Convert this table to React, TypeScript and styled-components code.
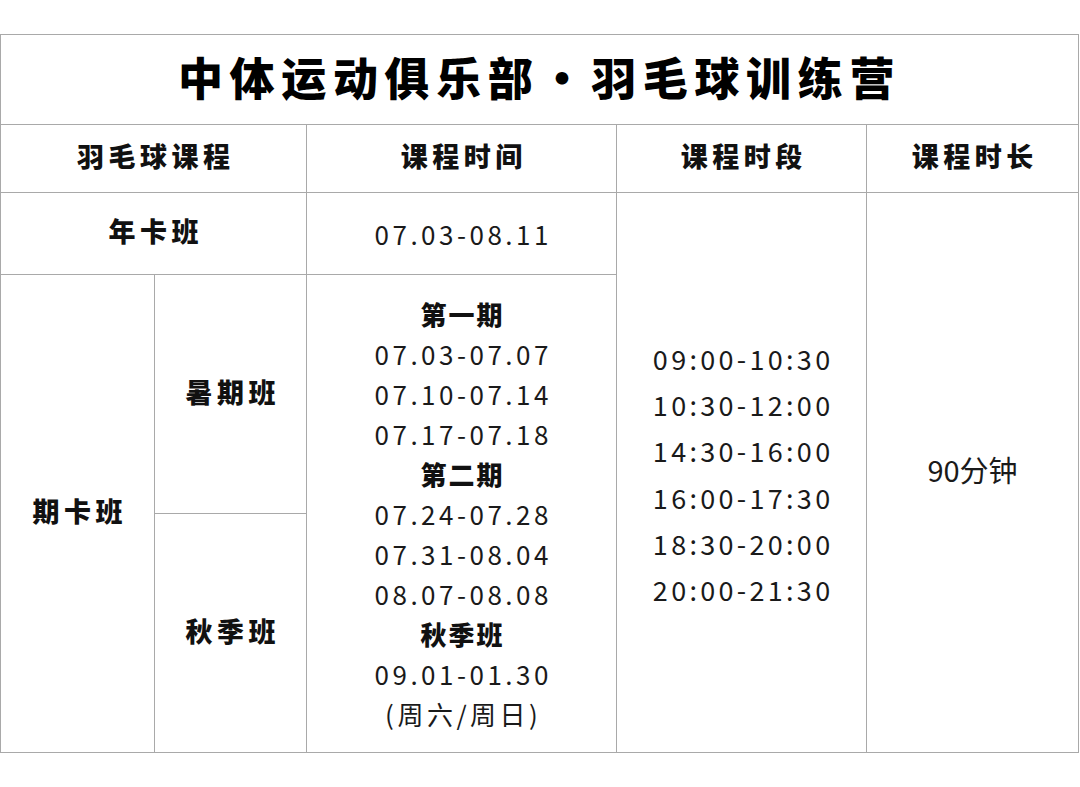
import styled, { createGlobalStyle } from 'styled-components'

const GlobalStyle = createGlobalStyle`
  html, body {
    margin: 0;
    padding: 0;
    background: #ffffff;
  }
  body {
    font-family: "Noto Sans CJK SC", "Noto Sans", sans-serif;
    color: #111111;
  }
`

const LINE = '#a9a9a9'

const summerDates = [
  { text: '第一期', bold: true },
  { text: '07.03-07.07' },
  { text: '07.10-07.14' },
  { text: '07.17-07.18' },
  { text: '第二期', bold: true },
  { text: '07.24-07.28' },
  { text: '07.31-08.04' },
  { text: '08.07-08.08' },
  { text: '秋季班', bold: true },
  { text: '09.01-01.30' },
  { text: '(周六/周日)' },
]

const timeSlots = [
  '09:00-10:30',
  '10:30-12:00',
  '14:30-16:00',
  '16:00-17:30',
  '18:30-20:00',
  '20:00-21:30',
]

function App() {
  return (
    <>
      <GlobalStyle />
      <Page>
        <Schedule>
          <Cell $col="1 / 6" $row="1">
            <Title>中体运动俱乐部·羽毛球训练营</Title>
          </Cell>

          <Cell $col="1 / 3" $row="2">
            <HeadText>羽毛球课程</HeadText>
          </Cell>
          <Cell $col="3" $row="2">
            <HeadText>课程时间</HeadText>
          </Cell>
          <Cell $col="4" $row="2">
            <HeadText>课程时段</HeadText>
          </Cell>
          <Cell $col="5" $row="2">
            <HeadText>课程时长</HeadText>
          </Cell>

          <Cell $col="1 / 3" $row="3">
            <Label>年卡班</Label>
          </Cell>
          <Cell $col="3" $row="3">
            <DateLine>07.03-08.11</DateLine>
          </Cell>
          <Cell $col="4" $row="3 / 6">
            <SlotList>
              {timeSlots.map((slot) => (
                <SlotLine key={slot}>{slot}</SlotLine>
              ))}
            </SlotList>
          </Cell>
          <Cell $col="5" $row="3 / 6">
            <Duration>90分钟</Duration>
          </Cell>

          <Cell $col="1" $row="4 / 6">
            <Label>期卡班</Label>
          </Cell>
          <Cell $col="2" $row="4">
            <Label>暑期班</Label>
          </Cell>
          <Cell $col="2" $row="5">
            <Label>秋季班</Label>
          </Cell>
          <Cell $col="3" $row="4 / 6">
            <DateList>
              {summerDates.map((line, i) =>
                line.bold ? (
                  <PeriodLine key={i}>{line.text}</PeriodLine>
                ) : (
                  <DateLine key={i}>{line.text}</DateLine>
                )
              )}
            </DateList>
          </Cell>
        </Schedule>
      </Page>
    </>
  )
}

export default App

const Page = styled.div`
  width: 1080px;
  padding-top: 34px;
`

const Schedule = styled.div`
  display: grid;
  width: 1079px;
  box-sizing: border-box;
  padding: 1px;
  gap: 1px;
  background: ${LINE};
  grid-template-columns: 153px 151px 309px 249px 211px;
  grid-template-rows: 89px 67px 81px 238px 238px;
`

const Cell = styled.div<{ $col: string; $row: string }>`
  grid-column: ${({ $col }) => $col};
  grid-row: ${({ $row }) => $row};
  background: #ffffff;
  display: flex;
  align-items: center;
  justify-content: center;
  text-align: center;
`

const Title = styled.h1`
  margin: 0 0 6px 0;
  font-size: 45px;
  font-weight: 900;
  letter-spacing: 6.65px;
  line-height: 1;
  color: #000000;
`

const HeadText = styled.span`
  font-size: 27px;
  font-weight: 900;
  letter-spacing: 4.5px;
  margin: 0 0 6px 4.5px;
  color: #111111;
`

const Label = styled.span`
  font-size: 27px;
  font-weight: 900;
  letter-spacing: 4.5px;
  margin: 0 0 6px 4.5px;
  color: #111111;
`

const DateList = styled.div`
  display: flex;
  flex-direction: column;
  align-items: center;
`

const DateLine = styled.div`
  font-size: 26px;
  line-height: 40px;
  letter-spacing: 3.5px;
  margin-left: 3.5px;
  color: #1a1a1a;
`

const PeriodLine = styled.div`
  font-size: 26px;
  line-height: 40px;
  font-weight: 900;
  letter-spacing: 2px;
  margin-left: 2px;
  color: #111111;
`

const SlotList = styled.div`
  display: flex;
  flex-direction: column;
  align-items: center;
  margin-top: 4px;
`

const SlotLine = styled.div`
  font-size: 27px;
  line-height: 46.2px;
  letter-spacing: 3.3px;
  margin-left: 3.3px;
  color: #1a1a1a;
`

const Duration = styled.span`
  font-size: 29px;
  margin-bottom: 8px;
  color: #1a1a1a;
`
